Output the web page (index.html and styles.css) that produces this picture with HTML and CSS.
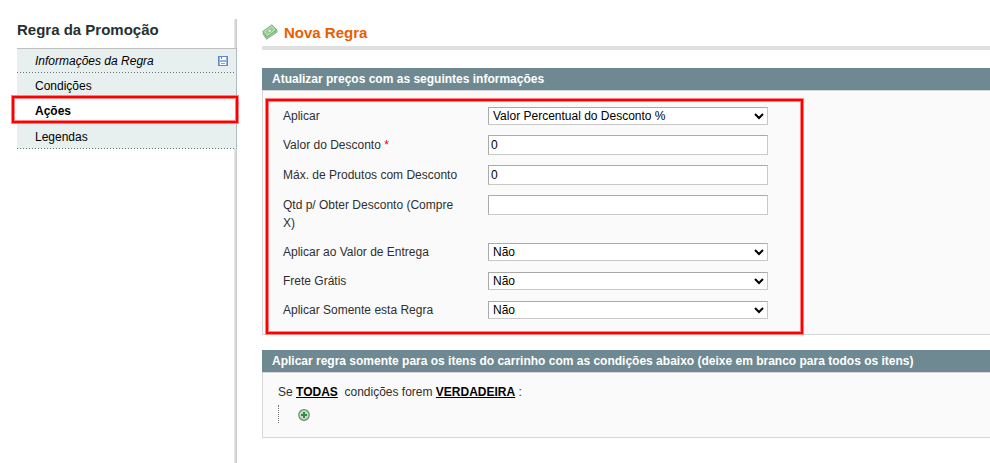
FILE: index.html
```html
<!DOCTYPE html>
<html lang="pt-BR">
<head>
    <meta charset="UTF-8">
    <title>Nova Regra</title>
    <link rel="stylesheet" href="styles.css">
</head>
<body>
    <div class="page">
        <div class="side-col">
            <h3>Regra da Promoção</h3>
            <ul class="tabs">
                <li class="changed">
                    <a>Informações da Regra</a>
                    <svg class="icon-save" width="10" height="10" viewBox="0 0 10 10">
                        <rect x=".5" y=".5" width="9" height="9" fill="#8fb3e2" stroke="#5f8bcb"/>
                        <rect x="2" y="1" width="6" height="3" fill="#fff"/>
                        <rect x="3" y="1" width="1" height="2" fill="#5b83c4"/>
                        <rect x="2" y="6" width="6" height="3" fill="#fff"/>
                        <rect x="3" y="7" width="4" height="1" fill="#7cc653"/>
                    </svg>
                </li>
                <li><a>Condições</a></li>
                <li class="active"><a>Ações</a></li>
                <li><a>Legendas</a></li>
            </ul>
        </div>

        <div class="main-col">
            <div class="content-header">
                <svg class="icon-money" width="16" height="16" viewBox="0 0 16 16">
                    <path d="M.8 9.5 4.5 15.3 15.3 8 14 5z" fill="#a5cfa2" stroke="#74aa74" stroke-width=".8"/>
                    <path d="M.6 7.5 10 .8 14.8 6 4.8 13.2z" fill="#9bcf98" stroke="#6aa66b" stroke-width=".8"/>
                    <path d="M2.5 7.7 9.8 2.4 12.8 5.9 5.2 11.4z" fill="none" stroke="#c9e8c4" stroke-width=".8"/>
                    <ellipse cx="7.7" cy="6.9" rx="2" ry="1.7" fill="#d2edcb" stroke="#7cb57b" stroke-width=".6"/>
                </svg>
                <h3>Nova Regra</h3>
            </div>

            <div class="entry-head">Atualizar preços com as seguintes informações</div>
            <div class="fieldset form-list">
                <div class="row">
                    <label>Aplicar</label>
                    <select><option>Valor Percentual do Desconto %</option></select>
                </div>
                <div class="row text-row">
                    <label>Valor do Desconto <span class="required">*</span></label>
                    <input type="text" value="0">
                </div>
                <div class="row text-row">
                    <label>Máx. de Produtos com Desconto</label>
                    <input type="text" value="0">
                </div>
                <div class="row text-row">
                    <label>Qtd p/ Obter Desconto (Compre X)</label>
                    <input type="text" value="">
                </div>
                <div class="row">
                    <label>Aplicar ao Valor de Entrega</label>
                    <select><option>Não</option></select>
                </div>
                <div class="row">
                    <label>Frete Grátis</label>
                    <select><option>Não</option></select>
                </div>
                <div class="row">
                    <label>Aplicar Somente esta Regra</label>
                    <select><option>Não</option></select>
                </div>
                <div class="highlight"></div>
            </div>

            <div class="entry-head">Aplicar regra somente para os itens do carrinho com as condições abaixo (deixe em branco para todos os itens)</div>
            <div class="fieldset rule-tree">
                <div class="rule">Se <a>TODAS</a>&nbsp; condições forem <a>VERDADEIRA</a> :</div>
                <div class="rule-children">
                    <svg width="12" height="12" viewBox="0 0 12 12">
                        <circle cx="6" cy="6" r="5.3" fill="#c4dcc4" stroke="#6b8a6f" stroke-width="1.2"/>
                        <path d="M5 3h2v2h2v2H7v2H5V7H3V5h2z" fill="#2f8f45"/>
                    </svg>
                </div>
            </div>
        </div>
    </div>
</body>
</html>
```
FILE: styles.css
```css
body {
    margin: 0;
    background: #fff;
    color: #2f2f2f;
    font: 12px/18px "Liberation Sans", Arial, Helvetica, sans-serif;
    overflow: hidden;
}
.page {
    display: flex;
    height: 444px;
    padding-top: 19px;
}
h3 {
    margin: 0;
    font-size: 15px;
    line-height: 20px;
}

/* left column */
.side-col {
    box-sizing: border-box;
    width: 237px;
    flex: none;
    padding-left: 17px;
    background: linear-gradient(to right, #ececec, #c4c4c4) right top / 3px 100% no-repeat;
}
.side-col h3 {
    padding: 1px 0 8px;
    color: #253033;
}
.tabs {
    margin: 0;
    padding: 0;
    list-style: none;
    border-top: 1px solid #bebebe;
}
.tabs li {
    box-sizing: border-box;
    display: flex;
    align-items: center;
    justify-content: space-between;
    height: 25px;
    padding: 0 8px 0 18px;
    background: #e7efef;
    border-right: 1px solid #a9bfbd;
    color: #000;
}
.tabs .changed {
    height: 24px;
    background: linear-gradient(to right, #6b7878 1px, transparent 1px) left bottom / 3px 1px repeat-x, #e7efef;
    font-style: italic;
}
.tabs .active {
    position: relative;
    height: 26px;
    background: #fff;
    border-right-color: #fff;
    font-weight: bold;
}
.tabs .active::after {
    content: "";
    position: absolute;
    top: -2px;
    left: -5px;
    width: 222px;
    height: 23px;
    border: 2px solid #f00;
    box-shadow: 0 0 0 1px #ff8080, inset 0 0 0 1px #ff8080;
}
.tabs li:last-child {
    background: linear-gradient(to right, #6b7878 1px, transparent 1px) left bottom / 3px 1px repeat-x, #e7efef;
}

/* right column */
.main-col {
    flex: 1;
    min-width: 0;
    padding-left: 25px;
}
.content-header {
    display: flex;
    align-items: center;
    gap: 6px;
    height: 27px;
    margin-bottom: 18px;
    border-bottom: 4px solid #dfdfdf;
}
.content-header h3 {
    color: #eb5e00;
}
.icon-money {
    margin-bottom: 2px;
}
.entry-head {
    height: 22px;
    padding-left: 10px;
    background: #6f8992;
    color: #fff;
    font-weight: bold;
    line-height: 22px;
    white-space: nowrap;
}
.fieldset {
    box-sizing: border-box;
    background: #fafafa;
    border: 1px solid #d6d6d6;
    border-right: 0;
}
.form-list {
    position: relative;
    display: flex;
    flex-direction: column;
    gap: 11px;
    height: 245px;
    margin-bottom: 15px;
    padding: 16px 0 0 20px;
}
.row {
    display: flex;
    align-items: flex-start;
}
.row label {
    width: 185px;
    margin-right: 20px;
}
.text-row {
    margin-top: -1px;
}
.text-row label {
    padding-top: 1px;
}
.required {
    color: #d40707;
}
.row input,
.row select {
    box-sizing: border-box;
    width: 280px;
    height: 20px;
    margin: 0;
    padding: 0 2px;
    border: 1px solid;
    border-color: #aaa #c8c8c8 #c8c8c8 #aaa;
    border-radius: 0;
    background: #fff;
    color: #000;
    font: 12px "Liberation Sans", Arial, Helvetica, sans-serif;
}
.row select {
    height: 18px;
    padding: 0 1px 0 0;
}
.highlight {
    position: absolute;
    top: 8px;
    left: 3px;
    width: 533px;
    height: 231px;
    border: 2px solid #f00;
    box-shadow: 0 0 0 1px #ff8080, inset 0 0 0 1px #ff8080;
    pointer-events: none;
}

/* conditions */
.rule-tree {
    height: 66px;
    padding: 10px 15px;
}
.rule a {
    color: #000;
    font-weight: bold;
    text-decoration: underline;
}
.rule-children {
    display: flex;
    align-items: flex-end;
    box-sizing: border-box;
    height: 18px;
    margin-top: 4px;
    padding: 0 0 2px 19px;
    border-left: 1px dotted #777;
}
```
